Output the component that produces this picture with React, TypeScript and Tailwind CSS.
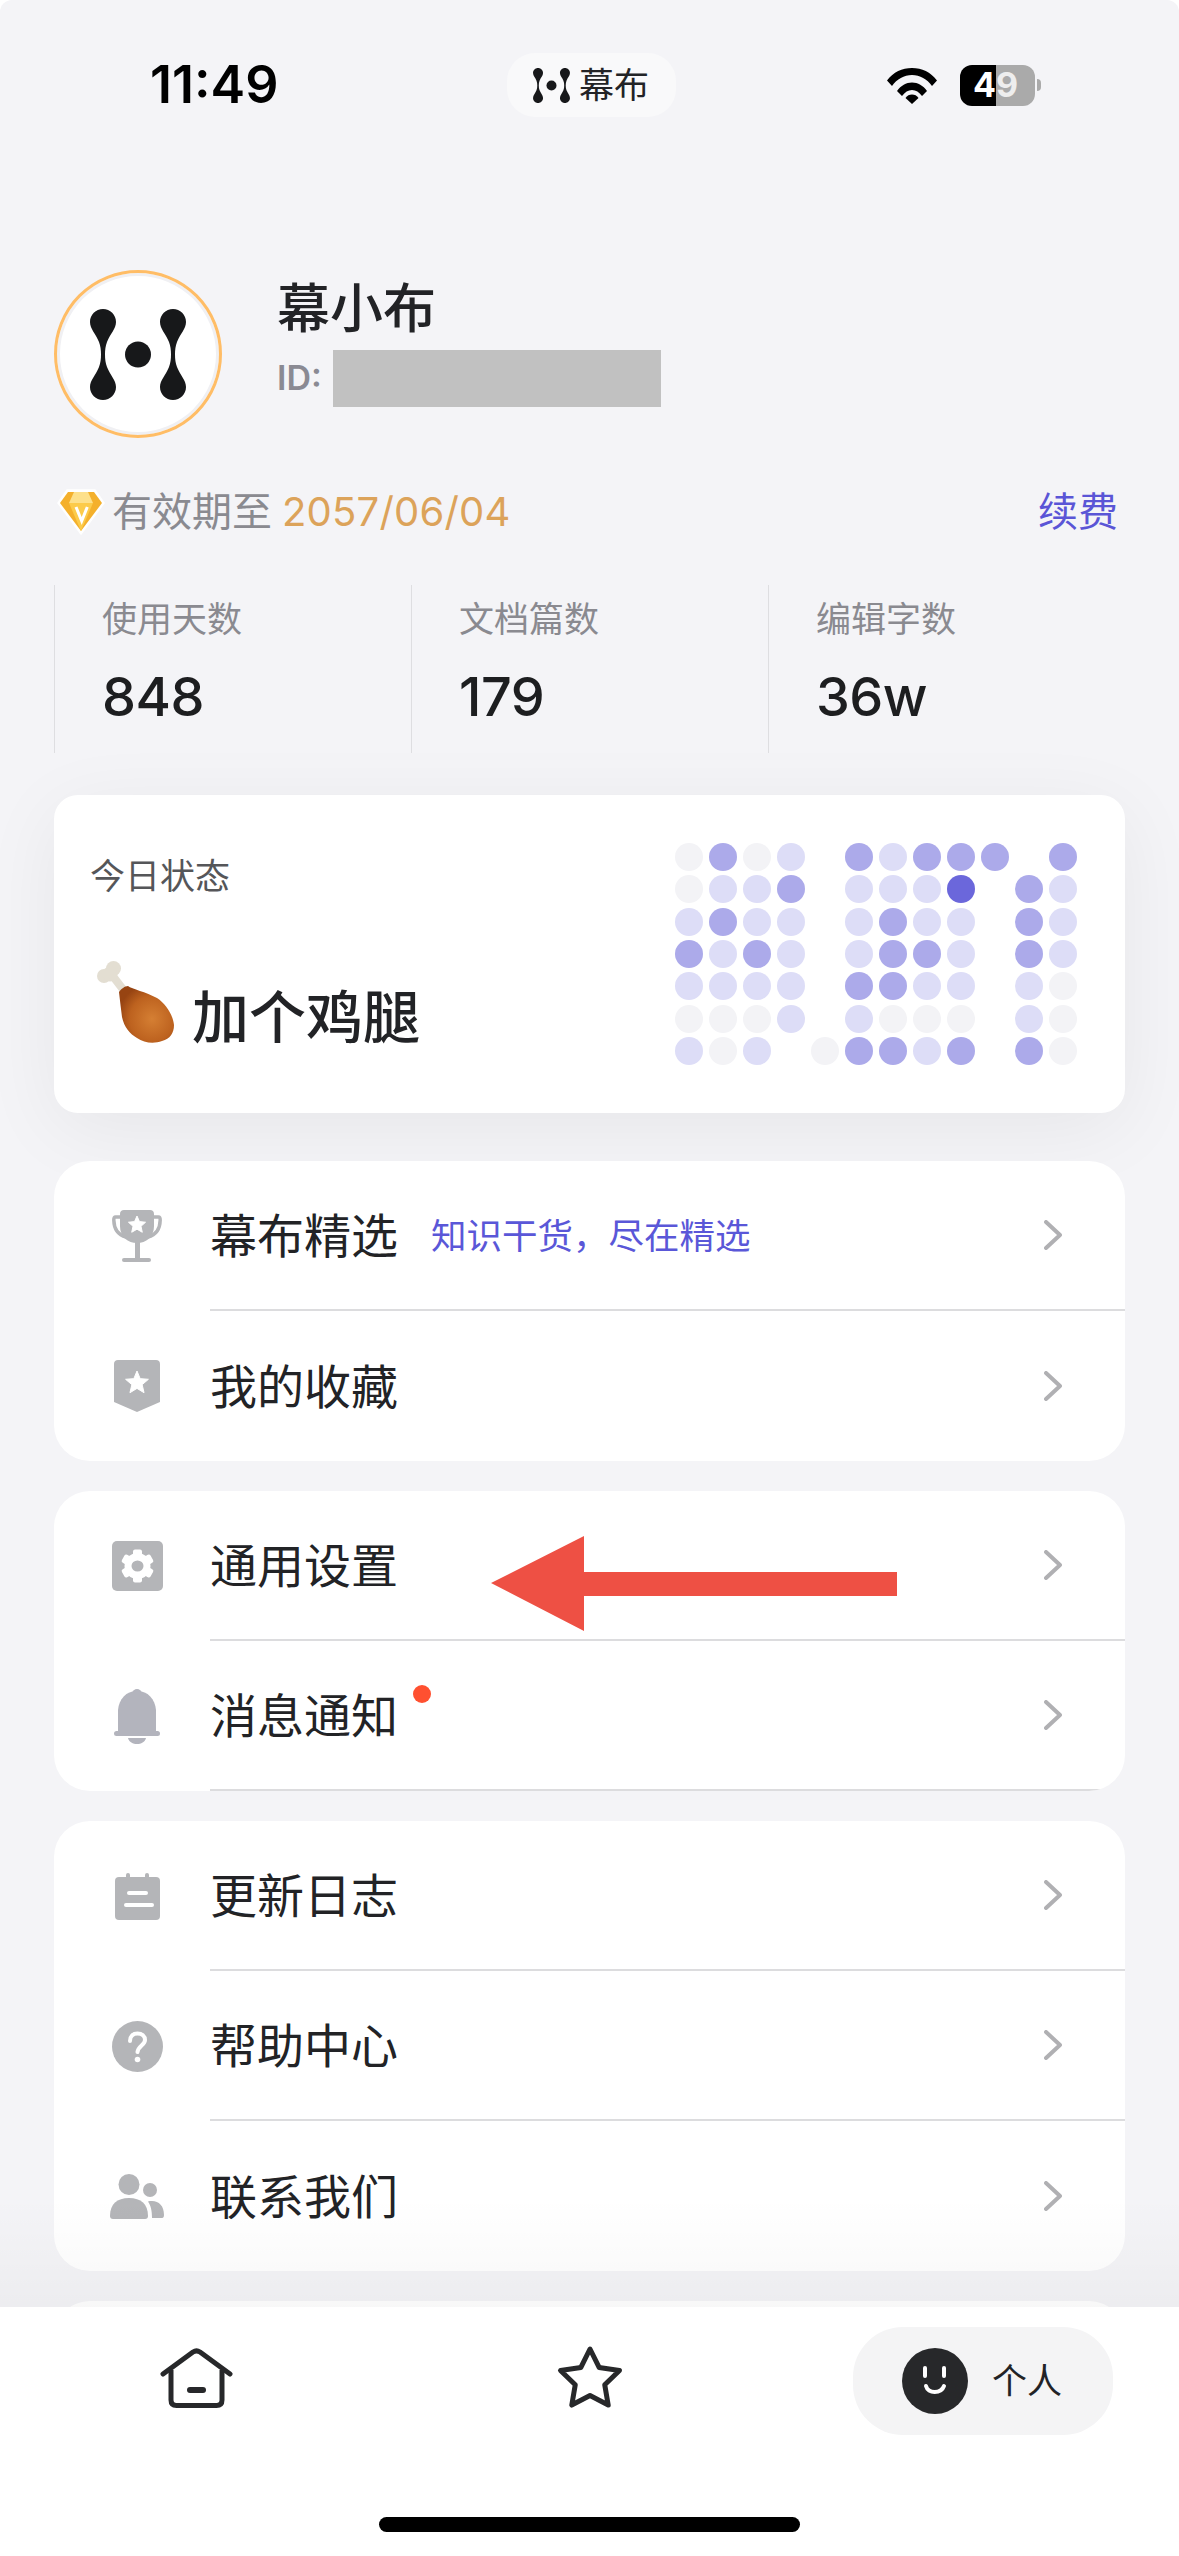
const dots = [
  "LDLP_DPDDD_D",
  "LPPD_PPPX_DP",
  "PDPP_PDPP_DP",
  "DPDP_PDDP_DP",
  "PPPP_DDPP_PL",
  "LLLP_PLLL_PL",
  "PLP_LDDPD_DL",
];

const dotColors: Record<string, string> = {
  L: "bg-[#f3f3f6]",
  P: "bg-[#ddddf7]",
  D: "bg-[#acaaea]",
  X: "bg-[#6b67db]",
  _: "bg-transparent",
};

function starPoints(cx: number, cy: number, R: number, r: number) {
  const pts: string[] = [];
  for (let i = 0; i < 10; i++) {
    const a = (Math.PI / 5) * i - Math.PI / 2;
    const d = i % 2 === 0 ? R : r;
    pts.push(`${(cx + d * Math.cos(a)).toFixed(2)},${(cy + d * Math.sin(a)).toFixed(2)}`);
  }
  return pts.join(" ");
}

const bone =
  "M0 0C7.2 0 13 5.8 13 13C13 20 7 25 4 33C2.5 37 2 41 2 45.5C2 50 2.5 54 4 58C7 66 13 71 13 78C13 85.2 7.2 91 0 91C-7.2 91 -13 85.2 -13 78C-13 71 -7 66 -4 58C-2.5 54 -2 50 -2 45.5C-2 41 -2.5 37 -4 33C-7 25 -13 20 -13 13C-13 5.8 -7.2 0 0 0Z";

function Logo({ className }: { className: string }) {
  return (
    <svg viewBox="0 0 96 91" className={className} fill="#17181a">
      <path d={bone} transform="translate(13 0)" />
      <path d={bone} transform="translate(83 0)" />
      <circle cx="48" cy="45.5" r="13" />
    </svg>
  );
}

function Wifi() {
  return (
    <svg viewBox="0 0 50 37" className="h-[37px] w-[50px]" fill="#000">
      <path d="M0 13.5C6.5 5 15 1 25 1C35 1 43.5 5 50 13.5L45 19C40 12 33 8 25 8C17 8 10 12 5 19Z" />
      <path d="M10 24C14 18.5 19 15.5 25 15.5C31 15.5 36 18.5 40 24L35 29C32 25 29 23 25 23C21 23 18 25 15 29Z" />
      <path d="M25 37L18.5 31C20 28.5 22.5 27.5 25 27.5C27.5 27.5 30 28.5 31.5 31Z" />
    </svg>
  );
}

function Battery() {
  return (
    <div className="ml-[23px] flex items-center">
      <div className="flex h-[41px] w-[75px] overflow-hidden rounded-[12px] text-[34px] leading-none font-bold">
        <div className="flex w-[36px] items-center justify-end bg-black text-white">4</div>
        <div className="flex flex-1 items-center bg-[#aaaaaa] text-[#eeeeee]">9</div>
      </div>
      <div className="ml-[2px] h-[12px] w-[4px] rounded-r-full bg-[#aaaaaa]" />
    </div>
  );
}

function Diamond() {
  return (
    <svg viewBox="0 0 48 46" className="h-[46px] w-[48px]">
      <path d="M10 1H38L47 14L24 45L1 14Z" fill="#fff" stroke="#fff" strokeWidth="1.5" strokeLinejoin="round" />
      <path d="M11 3H37L45 14L24 42L3 14Z" fill="#f4b02c" />
      <path d="M17 3H31L36 14H12Z" fill="#fde08a" />
      <path d="M12 14H36L24 42Z" fill="#fccb4a" />
      <path d="M19 18L24.7 32L30.3 18" fill="none" stroke="#fff" strokeWidth="3" />
    </svg>
  );
}

function Drumstick() {
  return (
    <svg viewBox="0 0 81 83" className="h-[83px] w-[81px]">
      <defs>
        <radialGradient id="meat" cx="0.6" cy="0.58" r="0.62">
          <stop offset="0" stopColor="#d57f33" />
          <stop offset="0.65" stopColor="#bd621f" />
          <stop offset="1" stopColor="#974412" />
        </radialGradient>
      </defs>
      <circle cx="17.5" cy="7.5" r="7.5" fill="#e3ded2" />
      <circle cx="8" cy="15" r="7" fill="#e3ded2" />
      <circle cx="14" cy="13" r="7.5" fill="#e3ded2" />
      <path d="M16 14L29 31" stroke="#e3ded2" strokeWidth="8" />
      <path
        d="M23 31C25 28 29 25 32 25C36 28 50 31 61 37C70 43 77 54 78 64C78 72 74 78 66 80C58 83 48 82 41 77C34 73 28 66 26 56C25 48 24 40 23 31Z"
        fill="url(#meat)"
      />
    </svg>
  );
}

function Trophy() {
  return (
    <svg viewBox="0 0 50 52" className="h-[52px] w-[50px]" fill="#b4b5b8">
      <path d="M9 7H3.5C2 7 1.8 8.5 1.8 10C2 19 6 25 14 27" fill="none" stroke="#b4b5b8" strokeWidth="3.5" />
      <path d="M41 7H46.5C48 7 48.2 8.5 48.2 10C48 19 44 25 36 27" fill="none" stroke="#b4b5b8" strokeWidth="3.5" />
      <path d="M12 0H38C40.5 0 42 1.5 42 4V16C42 27 34 33 25 33C16 33 8 27 8 16V4C8 1.5 9.5 0 12 0Z" />
      <rect x="23" y="32" width="5" height="16" />
      <rect x="10" y="48" width="29" height="4" rx="2" />
      <polygon points={starPoints(25, 15, 9, 4.2)} fill="#fff" stroke="#fff" strokeWidth="1" strokeLinejoin="round" />
    </svg>
  );
}

function Shield() {
  return (
    <svg viewBox="0 0 46 52" className="h-[52px] w-[46px]" fill="#b4b5b8">
      <path d="M4 0H42C44.5 0 46 1.5 46 4V42L23 52L0 42V4C0 1.5 1.5 0 4 0Z" />
      <polygon points={starPoints(23, 23, 12, 5.4)} fill="#fff" stroke="#fff" strokeWidth="1" strokeLinejoin="round" />
    </svg>
  );
}

function Gear() {
  return (
    <svg viewBox="0 0 51 50" className="h-[50px] w-[51px]">
      <rect width="51" height="50" rx="5" fill="#b4b5b8" />
      <g fill="#fff">
        <circle cx="25.5" cy="25" r="13" />
        {[0, 60, 120, 180, 240, 300].map((a) => (
          <rect key={a} x="21" y="8.5" width="9" height="7" rx="2" transform={`rotate(${a} 25.5 25)`} />
        ))}
      </g>
      <ellipse cx="25.5" cy="25" rx="6" ry="5.5" fill="#b4b5b8" />
    </svg>
  );
}

function Bell() {
  return (
    <svg viewBox="0 0 46 55" className="h-[55px] w-[46px]" fill="#b3b4bd">
      <circle cx="23" cy="4.5" r="4.5" />
      <path d="M23 2C34 2 41 10 42 21V43H4V21C5 10 12 2 23 2Z" />
      <rect y="42" width="46" height="5" rx="2.5" />
      <path d="M14 49H32C31 53 27 55 23 55C19 55 15 53 14 49Z" />
    </svg>
  );
}

function Calendar() {
  return (
    <svg viewBox="0 0 45 47" className="h-[47px] w-[45px]" fill="#b4b5b8">
      <rect x="11" width="4" height="8" rx="2" />
      <rect x="30" width="4" height="8" rx="2" />
      <rect y="4" width="45" height="43" rx="4" />
      <rect x="12" y="18" width="21" height="4" rx="2" fill="#fff" />
      <rect x="9" y="30" width="30" height="4" rx="2" fill="#fff" />
    </svg>
  );
}

function Help() {
  return (
    <svg viewBox="0 0 51 51" className="h-[51px] w-[51px]">
      <circle cx="25.5" cy="25.5" r="25.5" fill="#b4b5b8" />
      <path
        d="M18 20C18 15 21 12.5 25.5 12.5C30 12.5 33 15 33 19C33 24 26 25 25.5 31"
        fill="none"
        stroke="#fff"
        strokeWidth="4"
        strokeLinecap="round"
      />
      <circle cx="25.5" cy="38.5" r="2.8" fill="#fff" />
    </svg>
  );
}

function Users() {
  return (
    <svg viewBox="0 0 54 45" className="h-[45px] w-[54px]" fill="#b4b5b8">
      <circle cx="19" cy="10.5" r="10.5" />
      <path d="M0 42C0 30 7 24 19 24C31 24 38 30 38 42C38 44 37 45 35 45H3C1 45 0 44 0 42Z" />
      <circle cx="40" cy="16" r="7" />
      <path d="M42 27C49 27 54 32 54 41C54 43.5 53 44 51 44H42C42 37 41 32 38 27.5C39 27 40.5 27 42 27Z" />
    </svg>
  );
}

function Chevron() {
  return (
    <svg
      viewBox="0 0 18 30"
      className="h-[30px] w-[18px]"
      fill="none"
      stroke="#b0b0b3"
      strokeWidth="4"
      strokeLinecap="round"
      strokeLinejoin="round"
    >
      <path d="M2 2L16 15L2 28" />
    </svg>
  );
}

function HomeIcon() {
  return (
    <svg viewBox="0 0 73 60" className="h-[60px] w-[73px]" fill="none" stroke="#27282a" strokeWidth="5">
      <path d="M3 26L33 4C35 2.7 38 2.7 40 4L70 26" strokeLinecap="round" strokeLinejoin="round" />
      <path d="M11 22V52C11 55.5 13 57.5 16.5 57.5H56.5C60 57.5 62 55.5 62 52V22" />
      <rect x="27" y="39" width="19" height="6" rx="3" fill="#27282a" stroke="none" />
    </svg>
  );
}

function StarIcon() {
  return (
    <svg viewBox="0 0 68 66" className="h-[66px] w-[68px]">
      <polygon
        points={starPoints(34, 35, 31, 15.5)}
        fill="none"
        stroke="#27282a"
        strokeWidth="5"
        strokeLinejoin="round"
      />
    </svg>
  );
}

function Smiley() {
  return (
    <svg viewBox="0 0 66 66" className="h-[66px] w-[66px]">
      <circle cx="33" cy="33" r="33" fill="#27282a" />
      <rect x="21" y="18" width="4" height="12" rx="2" fill="#fff" />
      <rect x="40" y="18" width="4" height="12" rx="2" fill="#fff" />
      <path d="M24 38C26 46 39 46 42 38" fill="none" stroke="#fff" strokeWidth="4" strokeLinecap="round" />
    </svg>
  );
}

function MenuRow({
  icon,
  label,
  note,
  badge,
  divider = true,
}: {
  icon: React.ReactNode;
  label: string;
  note?: string;
  badge?: boolean;
  divider?: boolean;
}) {
  return (
    <div className="flex h-[150px] items-stretch">
      <div className="flex w-[156px] shrink-0 items-center justify-center pl-[10px]">{icon}</div>
      <div className={`flex flex-1 items-center pr-[63px] ${divider ? "border-b-2 border-[#dcdcde]" : ""}`}>
        <div className="relative text-[47px] leading-none text-[#222326]">
          {label}
          {badge && <span className="absolute top-[-7px] right-[-33px] h-[18px] w-[18px] rounded-full bg-[#ff5030]" />}
        </div>
        {note && <div className="mt-[3px] ml-[33px] text-[35.5px] leading-none text-[#5a57d8]">{note}</div>}
        <div className="ml-auto">
          <Chevron />
        </div>
      </div>
    </div>
  );
}

function MenuGroup({ children }: { children: React.ReactNode }) {
  return <div className="overflow-hidden rounded-[36px] bg-white">{children}</div>;
}

function Stat({ label, value }: { label: string; value: string }) {
  return (
    <div className="flex h-[168px] w-[357px] flex-col border-l border-[#dedee1] pl-[47px]">
      <div className="mt-[13px] text-[35px] leading-[42px] text-[#8a8a90]">{label}</div>
      <div className="mt-[25px] text-[54px] leading-[64px] font-medium tracking-[-0.5px] text-[#1d1e20]">{value}</div>
    </div>
  );
}

export default function App() {
  return (
    <div className="relative flex h-[2556px] w-[1179px] flex-col overflow-hidden rounded-t-[12px] bg-[#f4f4f7] font-['Inter','Noto_Sans_CJK_SC',sans-serif]">
      <div className="h-[2307px] overflow-hidden">
        {/* status bar */}
        <div className="mt-[53px] flex h-[64px] items-center pl-[150px]">
          <div className="w-[357px] text-[52px] leading-none font-semibold text-black">11:49</div>
          <div className="flex h-[64px] w-[169px] items-center rounded-[28px] bg-[#f9f9fa] pl-[26px]">
            <Logo className="h-[35px] w-[37px]" />
            <span className="ml-[9px] text-[35px] leading-none text-[#222326]">幕布</span>
          </div>
          <div className="ml-[211px]">
            <Wifi />
          </div>
          <Battery />
        </div>

        {/* profile */}
        <div className="mt-[153px] flex pl-[54px]">
          <div className="flex h-[168px] w-[168px] items-center justify-center rounded-full border-[3px] border-[#ffbd66] bg-white shadow-[inset_0_0_0_3px_#f0f0f3]">
            <Logo className="h-[91px] w-[96px]" />
          </div>
          <div className="ml-[55px]">
            <div className="mt-[13px] text-[53px] leading-[52px] font-medium text-[#222326]">幕小布</div>
            <div className="mt-[15px] flex items-center">
              <span className="mt-[-2px] w-[56px] text-[34px] leading-none font-semibold text-[#8a8a93]">ID:</span>
              <div className="h-[57px] w-[328px] bg-[#c1c1c1]" />
            </div>
          </div>
        </div>

        {/* membership */}
        <div className="mt-[51px] flex h-[46px] items-center pr-[61px] pl-[57px] text-[40px] leading-none">
          <Diamond />
          <span className="ml-[7px] text-[#8a8a90]">有效期至</span>
          <span className="ml-[10px] tracking-[0.2px] text-[#dca35a]">2057/06/04</span>
          <span className="ml-auto text-[#5a55d6]">续费</span>
        </div>

        {/* stats */}
        <div className="mt-[50px] flex pl-[54px]">
          <Stat label="使用天数" value="848" />
          <Stat label="文档篇数" value="179" />
          <Stat label="编辑字数" value="36w" />
        </div>

        {/* today */}
        <div className="mx-[54px] mt-[42px] flex h-[318px] items-center justify-between rounded-[24px] bg-white pr-[48px] pl-[36px] shadow-[0_16px_80px_rgba(0,0,0,0.06)]">
          <div className="flex h-full flex-col">
            <div className="mt-[60px] text-[35px] leading-[42px] text-[#555659]">今日状态</div>
            <div className="mt-[64px] ml-[6px] flex items-end">
              <Drumstick />
              <span className="mb-[-4px] ml-[15px] text-[57px] leading-[60px] font-medium text-[#222326]">加个鸡腿</span>
            </div>
          </div>
          <div className="grid grid-cols-12 gap-x-[6px] gap-y-[4.4px]">
            {dots.flatMap((row, r) =>
              row.split("").map((c, i) => (
                <div key={`${r}-${i}`} className={`h-[28px] w-[28px] rounded-full ${dotColors[c]}`} />
              )),
            )}
          </div>
        </div>

        {/* menus */}
        <div className="mx-[54px] mt-[48px] flex flex-col gap-[30px]">
          <MenuGroup>
            <MenuRow icon={<Trophy />} label="幕布精选" note="知识干货，尽在精选" />
            <MenuRow icon={<Shield />} label="我的收藏" divider={false} />
          </MenuGroup>
          <MenuGroup>
            <MenuRow icon={<Gear />} label="通用设置" />
            <MenuRow icon={<Bell />} label="消息通知" badge />
          </MenuGroup>
          <MenuGroup>
            <MenuRow icon={<Calendar />} label="更新日志" />
            <MenuRow icon={<Help />} label="帮助中心" />
            <MenuRow icon={<Users />} label="联系我们" divider={false} />
          </MenuGroup>
          <MenuGroup>
            <div className="h-[150px]" />
          </MenuGroup>
        </div>
      </div>

      {/* tab bar */}
      <div className="relative h-[249px] bg-white">
        <div className="absolute bottom-full left-0 h-[110px] w-full bg-gradient-to-b from-transparent to-black/[0.03]" />
        <div className="flex h-[150px] items-start pl-[160px]">
          <div className="mt-[41px]">
            <HomeIcon />
          </div>
          <div className="mt-[38px] ml-[323px]">
            <StarIcon />
          </div>
          <div className="mt-[20px] ml-[229px] flex h-[108px] w-[260px] items-center rounded-[50px] bg-[#f4f4f5] pl-[49px]">
            <Smiley />
            <span className="ml-[24px] text-[35px] leading-none text-[#222326]">个人</span>
          </div>
        </div>
        <div className="mx-auto mt-[60px] h-[15px] w-[421px] rounded-full bg-black" />
      </div>

      {/* annotation arrow */}
      <svg viewBox="0 0 406 95" className="absolute top-[1536px] left-[491px] h-[95px] w-[406px]" fill="#ee5044">
        <path d="M0 47L93 0V36H406V60H93V95Z" />
      </svg>
    </div>
  );
}
